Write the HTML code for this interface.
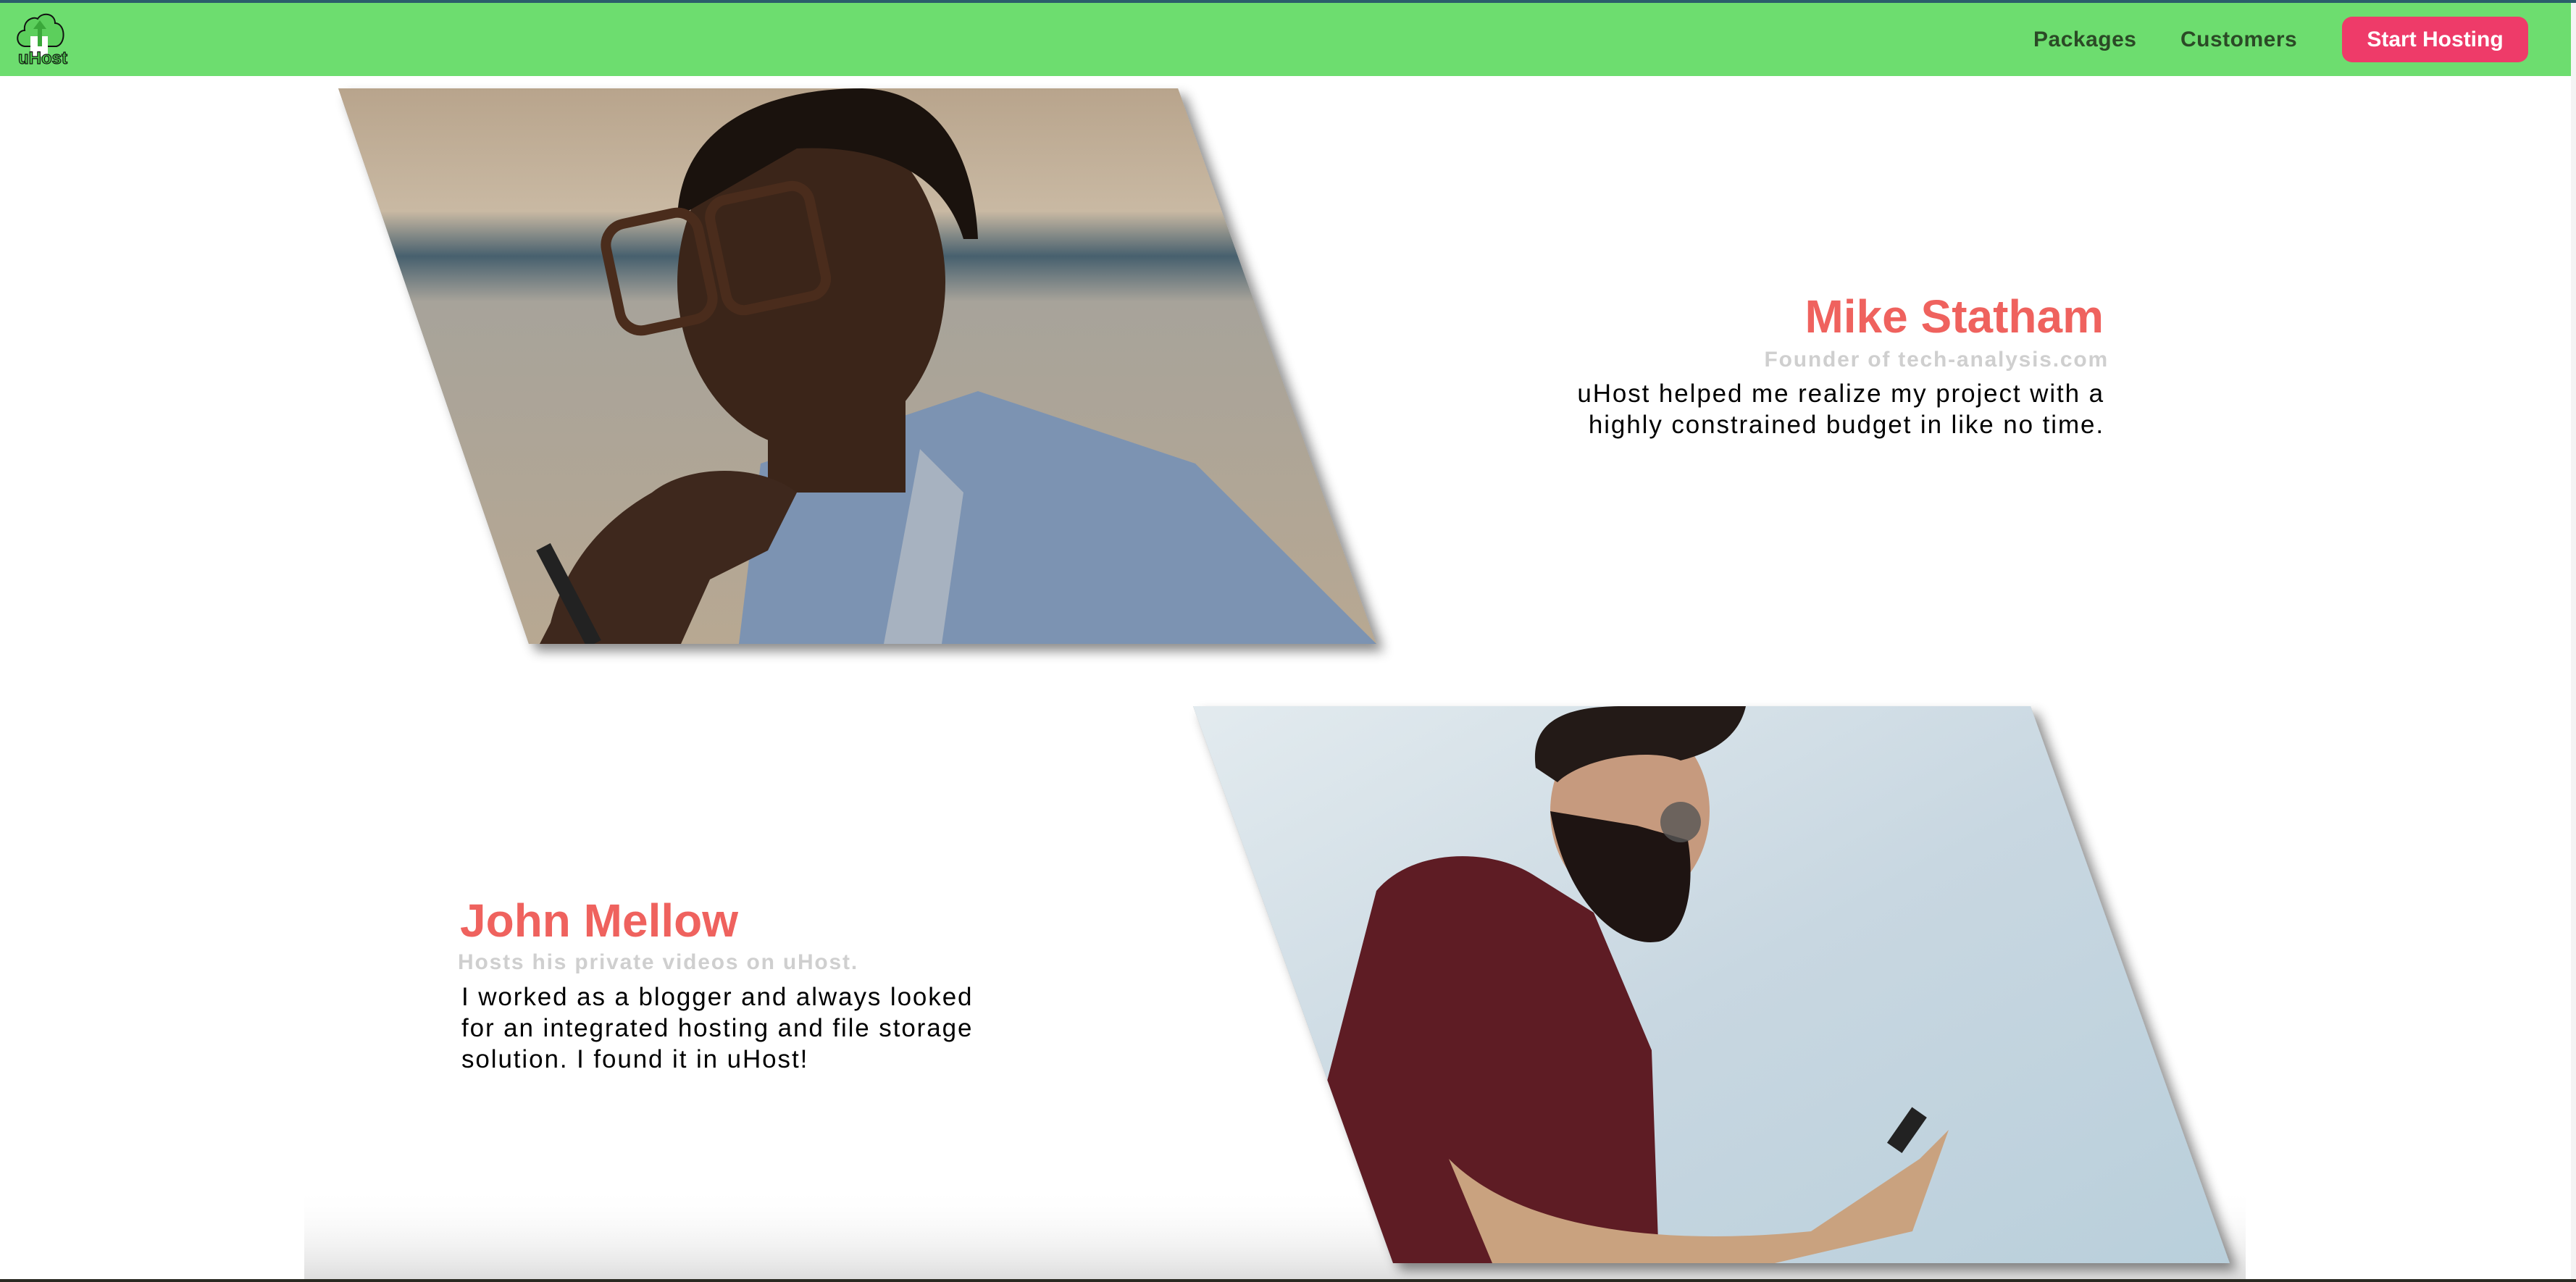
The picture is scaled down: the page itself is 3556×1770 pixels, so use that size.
<!DOCTYPE html>
<html><head><meta charset="utf-8"><style>
*{margin:0;padding:0;box-sizing:border-box}
body{width:3556px;height:1770px;background:#fff;position:relative;overflow:hidden;font-family:"Liberation Sans",sans-serif}
.top{position:absolute;left:0;top:0;width:3556px;height:4px;background:#2b5d6b}
.nav{position:absolute;left:0;top:4px;width:3549px;height:101px;background:#6ddd6f}
.sb{position:absolute;right:0;top:4px;width:7px;height:1766px;background:#f4f4f4}
.nl{position:absolute;top:38px;font-weight:bold;font-size:30px;color:#2b4a26;letter-spacing:.5px}
.btn{position:absolute;left:3233px;top:23px;width:257px;height:63px;background:#ee3b69;border-radius:14px;color:#fff;font-weight:bold;font-size:30px;text-align:center;line-height:63px}
.name{position:absolute;font-weight:bold;font-size:64px;color:#ef625e;white-space:nowrap}
.sub{position:absolute;font-weight:bold;font-size:30px;color:#cfcfcf;white-space:nowrap;letter-spacing:1.8px}
.txt{position:absolute;font-size:35px;line-height:43px;color:#000;white-space:nowrap;letter-spacing:1.9px}
.r{text-align:right}
</style></head><body>
<div class="top"></div>
<div class="nav"></div>
<svg style="position:absolute;left:20px;top:14px" width="78" height="80" viewBox="0 0 78 80">
<path d="M14 50 C0 48 2 28 14 28 C12 14 26 8 32 12 C38 2 56 4 56 18 C70 18 72 46 58 50 Z" fill="#5ccf5c" stroke="#111" stroke-width="2"/>
<rect x="22" y="36" width="24" height="28" fill="#fff"/>
<path d="M32 50 V26 H26 L35 14 L44 26 H38 V50 Z" fill="#3aa83a"/>
<text x="39" y="74" text-anchor="middle" font-family="Liberation Sans" font-weight="bold" font-size="24" fill="#4ccc4c" stroke="#111" stroke-width="1.2">uHost</text>
</svg>
<div class="nl" style="left:2807px">Packages</div>
<div class="nl" style="left:3010px">Customers</div>
<div class="btn">Start Hosting</div>
<div class="sb"></div>

<svg style="position:absolute;left:0;top:0" width="3556" height="1770">
<defs>
<filter id="sh" x="-10%" y="-10%" width="130%" height="130%"><feDropShadow dx="10" dy="10" stdDeviation="8" flood-color="#000" flood-opacity=".45"/></filter>
<filter id="bl"><feGaussianBlur stdDeviation="30"/></filter>
<clipPath id="c1"><polygon points="467,122 1626,122 1900,889 730,889"/></clipPath>
<clipPath id="c2"><polygon points="1647,975 2803,975 3078,1744 1923,1744"/></clipPath>
<linearGradient id="bg1" x1="0" y1="0" x2="0" y2="1">
<stop offset="0" stop-color="#b8a48c"/><stop offset=".22" stop-color="#c9b9a3"/><stop offset=".3" stop-color="#47606e"/><stop offset=".38" stop-color="#a7a39a"/><stop offset="1" stop-color="#b8a892"/></linearGradient>
<linearGradient id="bg2" x1="0" y1="0" x2="1" y2="1">
<stop offset="0" stop-color="#e3ebef"/><stop offset=".5" stop-color="#c8d7e1"/><stop offset="1" stop-color="#b9cfdb"/></linearGradient>
<linearGradient id="bs" x1="0" y1="0" x2="0" y2="1"><stop offset="0" stop-color="#fff" stop-opacity="0"/><stop offset="1" stop-color="#dedede"/></linearGradient>
</defs>
<rect x="420" y="1640" width="2680" height="126" fill="url(#bs)"/>
<rect x="0" y="1766" width="3556" height="4" fill="#2a2a22"/>
<polygon points="467,122 1626,122 1900,889 730,889" fill="#999" filter="url(#sh)"/>
<g clip-path="url(#c1)">
<rect x="460" y="120" width="1450" height="780" fill="url(#bg1)"/>
<path d="M1350 540 L1650 640 L1900 889 L1020 889 L1050 640 Z" fill="#7c93b2"/>
<path d="M1270 620 L1330 680 L1300 889 L1220 889 Z" fill="#a7b2c0"/>
<ellipse cx="1120" cy="390" rx="185" ry="230" fill="#3b2519"/>
<path d="M935 300 C940 170 1060 122 1190 122 C1300 125 1345 220 1350 330 L1330 330 C1300 230 1200 200 1100 205 Z" fill="#1a120d"/>
<rect x="1060" y="500" width="190" height="180" fill="#3b2519"/>
<path d="M760 860 C780 780 830 720 900 680 C950 640 1050 640 1100 680 L1060 760 L980 800 L940 889 L745 889 Z" fill="#3e281d"/>
<rect x="845" y="300" width="130" height="150" rx="30" fill="none" stroke="#4a2c1c" stroke-width="14" transform="rotate(-12 910 375)"/>
<rect x="990" y="265" width="140" height="155" rx="25" fill="none" stroke="#4a2c1c" stroke-width="14" transform="rotate(-12 1060 342)"/>
<path d="M750 755 L820 889" stroke="#222" stroke-width="22"/>
</g>
<polygon points="1647,975 2803,975 3078,1744 1923,1744" fill="#999" filter="url(#sh)"/>
<g clip-path="url(#c2)">
<rect x="1640" y="970" width="1450" height="780" fill="url(#bg2)"/>
<path d="M1900 1230 C1950 1170 2060 1170 2120 1210 L2200 1260 L2280 1450 L2290 1744 L1880 1744 L1830 1500 Z" fill="#5e1c24"/>
<path d="M2000 1600 C2100 1700 2300 1720 2500 1700 L2650 1600 L2690 1560 L2640 1700 L2450 1744 L2060 1744 Z" fill="#c9a27f"/>
<ellipse cx="2250" cy="1120" rx="110" ry="130" fill="#c69a7e"/>
<path d="M2140 1120 C2160 1240 2230 1310 2290 1300 C2330 1290 2340 1220 2330 1160 L2260 1140 Z" fill="#1e1412"/>
<path d="M2120 1060 C2110 990 2170 975 2240 975 L2410 975 C2400 1020 2360 1040 2320 1050 C2270 1030 2180 1050 2150 1080 Z" fill="#231a17"/>
<circle cx="2320" cy="1135" r="28" fill="#555" opacity=".8"/>
<rect x="2620" y="1530" width="25" height="60" fill="#222" transform="rotate(35 2632 1560)"/>
</g>
</svg>

<div class="name r" style="right:652px;top:400px">Mike Statham</div>
<div class="sub r" style="right:645px;top:480px">Founder of tech-analysis.com</div>
<div class="txt r" style="right:651px;top:522px">uHost helped me realize my project with a<br>highly constrained budget in like no time.</div>

<div class="name" style="left:635px;top:1234px">John Mellow</div>
<div class="sub" style="left:632px;top:1312px">Hosts his private videos on uHost.</div>
<div class="txt" style="left:637px;top:1355px">I worked as a blogger and always looked<br>for an integrated hosting and file storage<br>solution. I found it in uHost!</div>
</body></html>
